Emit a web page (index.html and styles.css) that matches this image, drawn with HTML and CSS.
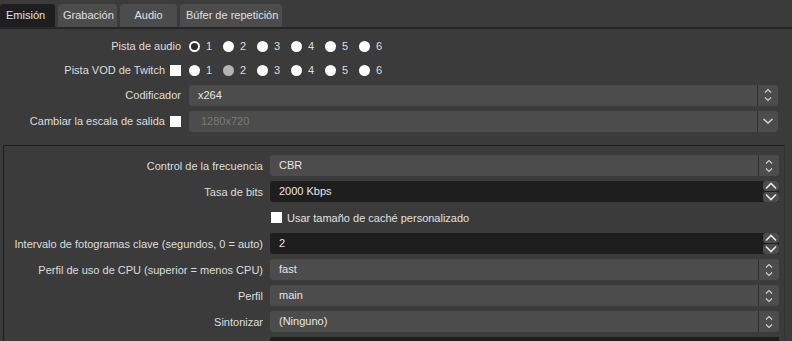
FILE: index.html
```html
<!DOCTYPE html>
<html lang="es">
<head>
    <meta charset="UTF-8">
    <title>Ajustes - Salida</title>
    <link rel="stylesheet" href="styles.css">
</head>
<body>
    <div class="tabbar">
        <div class="tab active">Emisión</div>
        <div class="tab tab-rec">Grabación</div>
        <div class="tab tab-audio">Audio</div>
        <div class="tab tab-buffer">Búfer de repetición</div>
    </div>

    <div class="form top-form">
        <div class="label">Pista de audio</div>
        <div class="radios">
            <span class="radio-item"><span class="radio hollow"></span>1</span>
            <span class="radio-item"><span class="radio"></span>2</span>
            <span class="radio-item"><span class="radio"></span>3</span>
            <span class="radio-item"><span class="radio"></span>4</span>
            <span class="radio-item"><span class="radio"></span>5</span>
            <span class="radio-item"><span class="radio"></span>6</span>
        </div>

        <div class="label">Pista VOD de Twitch <span class="check"></span></div>
        <div class="radios">
            <span class="radio-item"><span class="radio"></span>1</span>
            <span class="radio-item"><span class="radio grey"></span>2</span>
            <span class="radio-item"><span class="radio"></span>3</span>
            <span class="radio-item"><span class="radio"></span>4</span>
            <span class="radio-item"><span class="radio"></span>5</span>
            <span class="radio-item"><span class="radio"></span>6</span>
        </div>

        <div class="label">Codificador</div>
        <div class="combo">
            <span class="value">x264</span>
            <span class="arrows"><svg width="10" height="14" viewBox="0 0 10 14"><path d="M2 4.5 L5 1.5 L8 4.5 M2 9.5 L5 12.5 L8 9.5" fill="none" stroke="#cfcfcf" stroke-width="1.2"/></svg></span>
        </div>

        <div class="label">Cambiar la escala de salida <span class="check"></span></div>
        <div class="combo disabled">
            <span class="value">1280x720</span>
            <span class="arrows"><svg width="12" height="8" viewBox="0 0 12 8"><path d="M1.5 2 L6 6 L10.5 2" fill="none" stroke="#d8d8d8" stroke-width="1.4"/></svg></span>
        </div>
    </div>

    <div class="panel">
        <div class="form panel-form">
            <div class="label">Control de la frecuencia</div>
            <div class="combo">
                <span class="value">CBR</span>
                <span class="arrows"><svg width="10" height="14" viewBox="0 0 10 14"><path d="M2 4.5 L5 1.5 L8 4.5 M2 9.5 L5 12.5 L8 9.5" fill="none" stroke="#cfcfcf" stroke-width="1.2"/></svg></span>
            </div>

            <div class="label">Tasa de bits</div>
            <div class="spin">
                <span class="value">2000 Kbps</span>
                <span class="spin-buttons">
                    <span class="spin-btn"><svg width="14" height="8" viewBox="0 0 14 8"><path d="M2 6.5 L7 1.5 L12 6.5" fill="none" stroke="#e6e6e6" stroke-width="1.6"/></svg></span>
                    <span class="spin-btn"><svg width="14" height="8" viewBox="0 0 14 8"><path d="M2 1.5 L7 6.5 L12 1.5" fill="none" stroke="#e6e6e6" stroke-width="1.6"/></svg></span>
                </span>
            </div>

            <div class="label"></div>
            <div class="check-row"><span class="check"></span>Usar tamaño de caché personalizado</div>

            <div class="label">Intervalo de fotogramas clave (segundos, 0 = auto)</div>
            <div class="spin">
                <span class="value">2</span>
                <span class="spin-buttons">
                    <span class="spin-btn"><svg width="14" height="8" viewBox="0 0 14 8"><path d="M2 6.5 L7 1.5 L12 6.5" fill="none" stroke="#e6e6e6" stroke-width="1.6"/></svg></span>
                    <span class="spin-btn"><svg width="14" height="8" viewBox="0 0 14 8"><path d="M2 1.5 L7 6.5 L12 1.5" fill="none" stroke="#e6e6e6" stroke-width="1.6"/></svg></span>
                </span>
            </div>

            <div class="label">Perfil de uso de CPU (superior = menos CPU)</div>
            <div class="combo">
                <span class="value">fast</span>
                <span class="arrows"><svg width="10" height="14" viewBox="0 0 10 14"><path d="M2 4.5 L5 1.5 L8 4.5 M2 9.5 L5 12.5 L8 9.5" fill="none" stroke="#cfcfcf" stroke-width="1.2"/></svg></span>
            </div>

            <div class="label">Perfil</div>
            <div class="combo">
                <span class="value">main</span>
                <span class="arrows"><svg width="10" height="14" viewBox="0 0 10 14"><path d="M2 4.5 L5 1.5 L8 4.5 M2 9.5 L5 12.5 L8 9.5" fill="none" stroke="#cfcfcf" stroke-width="1.2"/></svg></span>
            </div>

            <div class="label">Sintonizar</div>
            <div class="combo">
                <span class="value">(Ninguno)</span>
                <span class="arrows"><svg width="10" height="14" viewBox="0 0 10 14"><path d="M2 4.5 L5 1.5 L8 4.5 M2 9.5 L5 12.5 L8 9.5" fill="none" stroke="#cfcfcf" stroke-width="1.2"/></svg></span>
            </div>

            <div class="label"></div>
            <div class="spin">
                <span class="value"></span>
            </div>
        </div>
    </div>
</body>
</html>
```

FILE: styles.css
```css
html, body {
    margin: 0;
    height: 100%;
    overflow: hidden;
}

body {
    background-color: #3b3b3b;
    color: #dedede;
    font-family: "Liberation Sans", Arial, sans-serif;
    font-size: 11px;
}

.tabbar {
    display: flex;
    gap: 3px;
    padding-top: 4px;
    height: 23px;
    border-bottom: 2px solid #262626;
}

.tab {
    box-sizing: border-box;
    background-color: #4c4c4c;
    border-radius: 3px 3px 0 0;
    padding: 0 6px;
    line-height: 23px;
    color: #e0e0e0;
    white-space: nowrap;
}

.tab.active {
    background-color: #1f1e1f;
    width: 55px;
}

.tab-rec {
    width: 59px;
    padding-left: 5px;
}

.tab-audio {
    width: 57px;
    text-align: center;
}

.tab-buffer {
    width: 102px;
}

.form {
    display: grid;
    align-items: center;
}

.top-form {
    grid-template-columns: 181px 1fr;
    column-gap: 8px;
    padding: 5px 14px 0 0;
    grid-template-rows: 24px 24px 26px 26px;
}

.label {
    text-align: right;
    white-space: nowrap;
    display: flex;
    justify-content: flex-end;
    align-items: center;
    gap: 5px;
}

.radios {
    display: flex;
}

.radio-item {
    display: flex;
    align-items: center;
    gap: 6px;
    width: 34px;
}

.radio {
    width: 11px;
    height: 11px;
    border-radius: 50%;
    background-color: #fff;
    box-sizing: border-box;
}

.radio.hollow {
    background-color: #2a2a2a;
    border: 2.5px solid #fff;
}

.radio.grey {
    background-color: #b4b4b4;
}

.check {
    display: inline-block;
    width: 11px;
    height: 11px;
    background-color: #fff;
    flex: none;
}

.combo {
    display: flex;
    height: 21px;
    background-color: #4c4c4c;
    border-radius: 3px;
    color: #e6e6e6;
}

.combo .value {
    flex: 1;
    padding-left: 9px;
    line-height: 21px;
}

.combo .arrows {
    width: 20px;
    border-left: 1px solid #303030;
    display: flex;
    align-items: center;
    justify-content: center;
}

.combo.disabled .value {
    color: #7a7a7a;
    padding-left: 12px;
}

.spin {
    display: flex;
    height: 21px;
}

.spin .value {
    flex: 1;
    background-color: #1f1e1f;
    border-radius: 3px 0 0 3px;
    padding-left: 9px;
    line-height: 21px;
    color: #e6e6e6;
}

.spin-buttons {
    width: 16px;
    display: flex;
    flex-direction: column;
    gap: 1px;
    background-color: #1f1e1f;
}

.spin-btn {
    flex: 1;
    background-color: #4c4c4c;
    border-radius: 3px;
    display: flex;
    align-items: center;
    justify-content: center;
}

.panel {
    margin: 11px 7px 0 3px;
    border: 1px solid #1f1e1f;
    border-right-color: #333;
    padding: 9px 5px 0 7px;
    height: 300px;
}

.panel-form {
    grid-template-columns: 252px 1fr;
    column-gap: 7px;
    row-gap: 5px;
    grid-auto-rows: 21px;
}

.panel-form > :nth-child(5),
.panel-form > :nth-child(6) {
    height: 19px;
}

.check-row {
    display: flex;
    align-items: center;
    gap: 5px;
    padding-left: 1px;
    color: #e0e0e0;
}
```
